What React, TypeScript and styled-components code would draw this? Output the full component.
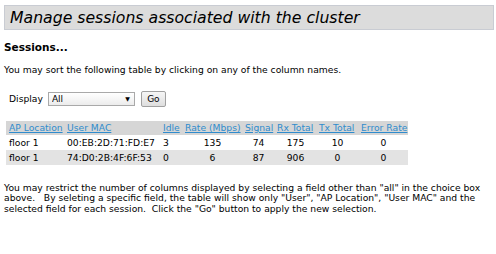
import * as React from "react";
import styled, { createGlobalStyle } from "styled-components";

const GlobalStyle = createGlobalStyle`
  html, body {
    margin: 0;
    padding: 0;
    background: #fff;
  }
  body {
    font-family: "DejaVu Sans", Verdana, sans-serif;
    font-size: 9.2px;
    color: #000;
  }
`;

const Page = styled.div`
  padding: 5px 2px 0 4px;
`;

const TitleBar = styled.h1`
  margin: 0;
  height: 23px;
  border: 1px solid #c9ccd3;
  background: #dcdcdc;
  padding: 0 0 0 5px;
  display: flex;
  align-items: center;
  font-size: 15.7px;
  font-weight: normal;
  font-style: italic;
  color: #000;
`;

const Heading = styled.h2`
  margin: 11px 0 0 0;
  font-size: 10.5px;
  font-weight: bold;
`;

const Note = styled.p<{ $gap: number }>`
  margin: ${(p) => p.$gap}px 0 0 0;
  line-height: 10.5px;
  max-width: 484px;
`;

const Controls = styled.form`
  display: flex;
  align-items: center;
  margin: 15px 0 0 5px;
`;

const Label = styled.span`
  margin-right: 5px;
`;

const SelectWrap = styled.span`
  position: relative;
  display: inline-flex;
  width: 87px;
  height: 14px;
`;

const Select = styled.select`
  appearance: none;
  width: 100%;
  height: 100%;
  margin: 0;
  padding: 0 0 0 3px;
  border: 1px solid #a9a9a9;
  border-radius: 0;
  background: linear-gradient(#ffffff, #ececec);
  font-family: inherit;
  font-size: 9px;
  color: #000;
`;

const Arrow = styled.span`
  position: absolute;
  right: 5px;
  top: 3px;
  font-size: 6px;
  pointer-events: none;
`;

const GoButton = styled.button`
  margin-left: 6px;
  width: 25px;
  height: 16px;
  padding: 0;
  border: 1px solid #a0a0a0;
  border-radius: 2px;
  background: linear-gradient(#f6f6f6, #dedede);
  font-family: inherit;
  font-size: 9px;
  color: #000;
`;

const Table = styled.table`
  margin: 14px 0 0 2px;
  border-collapse: collapse;
  table-layout: fixed;
  width: 402px;
`;

const Th = styled.th<{ $w: number }>`
  box-sizing: border-box;
  width: ${(p) => p.$w}px;
  height: 14px;
  padding: 0 1px 0 3px;
  text-align: left;
  font-weight: normal;
  white-space: nowrap;
  overflow: hidden;
  background: #d6d6d6;

  a {
    color: #2f8ccd;
    text-decoration: underline;
  }
`;

const Row = styled.tr<{ $alt?: boolean }>`
  background: ${(p) => (p.$alt ? "#e3e3e3" : "#fff")};
`;

const Td = styled.td<{ $align?: string }>`
  height: 15px;
  padding: 0 2px 0 3px;
  white-space: nowrap;
  text-align: ${(p) => p.$align || "center"};
`;

const columns: [string, number][] = [
  ["AP Location", 58],
  ["User MAC", 96],
  ["Idle", 22],
  ["Rate (Mbps)", 60],
  ["Signal", 32],
  ["Rx Total", 42],
  ["Tx Total", 42],
  ["Error Rate", 50],
];

const sessions = [
  ["floor 1", "00:EB:2D:71:FD:E7", "3", "135", "74", "175", "10", "0"],
  ["floor 1", "74:D0:2B:4F:6F:53", "0", "6", "87", "906", "0", "0"],
];

export default function App() {
  return (
    <>
      <GlobalStyle />
      <Page>
        <TitleBar>Manage sessions associated with the cluster</TitleBar>
        <Heading>Sessions...</Heading>
        <Note $gap={12}>
          You may sort the following table by clicking on any of the column
          names.
        </Note>
        <Controls onSubmit={(e) => e.preventDefault()}>
          <Label>Display</Label>
          <SelectWrap>
            <Select defaultValue="all">
              <option value="all">All</option>
            </Select>
            <Arrow>▼</Arrow>
          </SelectWrap>
          <GoButton type="submit">Go</GoButton>
        </Controls>
        <Table>
          <thead>
            <tr>
              {columns.map(([name, w]) => (
                <Th key={name} $w={w}>
                  <a href="#">{name}</a>
                </Th>
              ))}
            </tr>
          </thead>
          <tbody>
            {sessions.map((s, i) => (
              <Row key={s[1]} $alt={i % 2 === 1}>
                {s.map((v, j) => (
                  <Td key={j} $align={j < 3 ? "left" : "center"}>
                    {v}
                  </Td>
                ))}
              </Row>
            ))}
          </tbody>
        </Table>
        <Note $gap={18}>
          You may restrict the number of columns displayed by selecting a field
          other than "all" in the choice box above.&nbsp;&nbsp; By seleting a
          specific field, the table will show only "User", "AP Location", "User
          MAC" and the selected field for each session.&nbsp; Click the "Go"
          button to apply the new selection.
        </Note>
      </Page>
    </>
  );
}
